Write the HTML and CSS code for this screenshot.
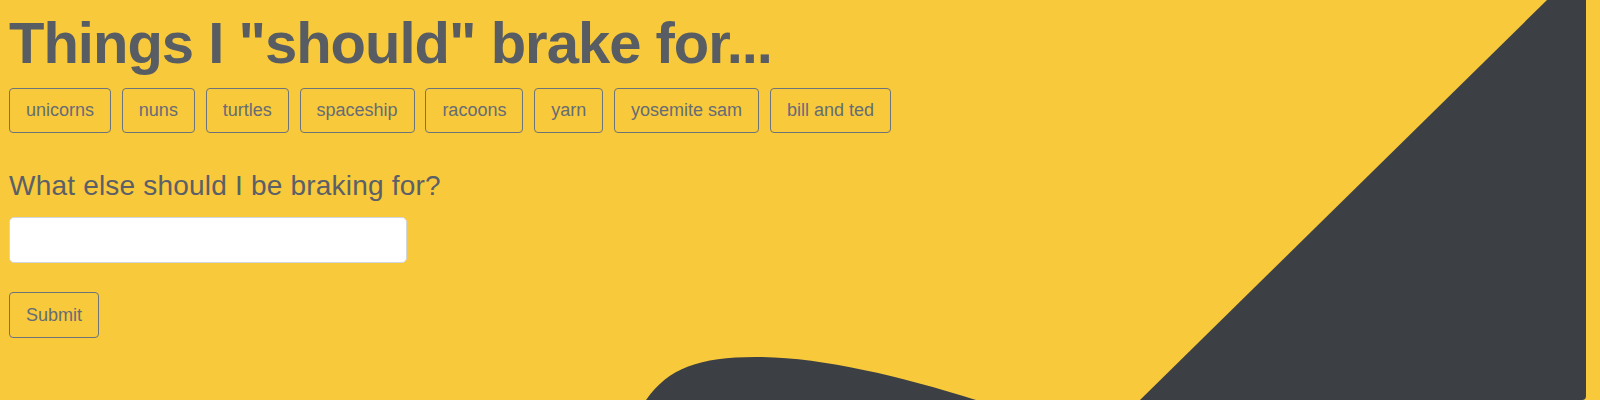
FILE: index.html
```html
<!DOCTYPE html>
<html lang="en">
<head>
<meta charset="utf-8">
<title>Things I "should" brake for...</title>
<link rel="stylesheet" href="styles.css">
</head>
<body>
<div class="sign">
  <svg class="sign-art" width="1600" height="400" viewBox="0 0 1600 400" aria-hidden="true">
    <path d="M1547 0 L1586 0 L1586 396 Q1586 400 1582 400 L1140 400 Z" fill="#3c4045"/>
    <path d="M646 400 C668 368 700 357 755 357 C820 357 895 375 976 400 Z" fill="#3c4045"/>
  </svg>
  <main class="content">
    <h1 class="title">Things I "should" brake for...</h1>
    <ul class="tags">
      <li class="tag">unicorns</li>
      <li class="tag">nuns</li>
      <li class="tag">turtles</li>
      <li class="tag">spaceship</li>
      <li class="tag">racoons</li>
      <li class="tag">yarn</li>
      <li class="tag">yosemite sam</li>
      <li class="tag">bill and ted</li>
    </ul>
    <form class="form">
      <label class="label" for="thing">What else should I be braking for?</label>
      <input class="input" id="thing" type="text">
      <button class="submit" type="button">Submit</button>
    </form>
  </main>
</div>
</body>
</html>
```

FILE: styles.css
```css
html, body {
  margin: 0;
  padding: 0;
  height: 100%;
}
body {
  background: #f8c93b;
  font-family: "Liberation Sans", Arial, Helvetica, sans-serif;
  color: #5b6068;
  overflow: hidden;
}
.sign {
  position: relative;
  width: 1600px;
  height: 400px;
}
.sign-art {
  position: absolute;
  left: 0;
  top: 0;
  display: block;
}
.content {
  position: relative;
  padding: 8px 9px 0;
}
.title {
  margin: 0;
  font-size: 58px;
  line-height: 70px;
  font-weight: 700;
  color: #585d64;
  letter-spacing: -1px;
}
.tags {
  list-style: none;
  margin: 10px 0 0;
  padding: 0;
  display: flex;
  gap: 10.8px;
}
.tag {
  box-sizing: border-box;
  height: 45px;
  padding: 0 16px;
  display: flex;
  align-items: center;
  border: 1px solid #6c737b;
  border-radius: 4px;
  font-size: 18px;
  color: #666c75;
}
.form {
  display: flex;
  flex-direction: column;
  align-items: flex-start;
  margin-top: 32px;
}
.label {
  font-size: 28px;
  line-height: 42px;
  letter-spacing: 0.2px;
  color: #5b6068;
}
.input {
  box-sizing: border-box;
  margin-top: 10px;
  width: 398px;
  height: 46px;
  border: 1px solid #d3d6da;
  border-radius: 5px;
  background: #fff;
  font-size: 18px;
  padding: 0 12px;
}
.submit {
  box-sizing: border-box;
  margin-top: 29px;
  height: 46px;
  padding: 0 16px;
  background: transparent;
  border: 1px solid #6c737b;
  border-radius: 4px;
  font-family: inherit;
  font-size: 18px;
  color: #666c75;
}
```
